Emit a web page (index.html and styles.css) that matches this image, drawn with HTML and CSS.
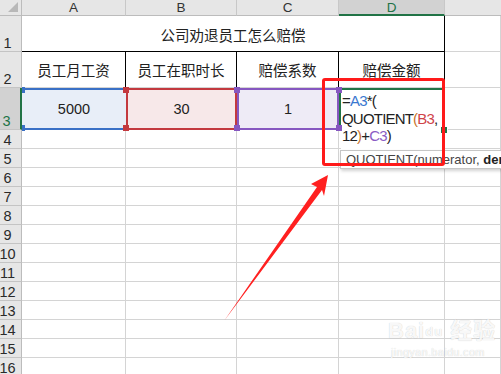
FILE: index.html
```html
<!DOCTYPE html>
<html lang="zh">
<head>
<meta charset="utf-8">
<link rel="stylesheet" href="styles.css">
</head>
<body>
<div class="wrap">
  <div class="sheet">
    <div class="corner"><span class="tri"></span></div>
    <div class="ch">A</div>
    <div class="ch">B</div>
    <div class="ch">C</div>
    <div class="ch ch-sel">D</div>
    <div class="ch ch-e"></div>

    <div class="rh">1</div>
    <div class="title">公司劝退员工怎么赔偿</div>
    <div class="c"></div>

    <div class="rh">2</div>
    <div class="hd">员工月工资</div>
    <div class="hd">员工在职时长</div>
    <div class="hd">赔偿系数</div>
    <div class="hd">赔偿金额</div>
    <div class="c"></div>

    <div class="rh rh-sel">3</div>
    <div class="rng rng-blue">5000<i class="sq tl"></i><i class="sq bl"></i><i class="sq tr"></i><i class="sq br"></i></div>
    <div class="rng rng-red">30<i class="sq tl"></i><i class="sq bl"></i><i class="sq tr"></i><i class="sq br"></i></div>
    <div class="rng rng-purple">1<i class="sq tl"></i><i class="sq bl"></i><i class="sq tr"></i><i class="sq br"></i></div>
    <div class="active">
      <div class="editor"><span class="k">=</span><span class="fb">A3</span><span class="k">*(</span><br><span class="k">QUOTIENT</span><span class="fo">(</span><span class="fr">B3</span><span class="k">,</span><br><span class="k">12</span><span class="fo">)</span><span class="k">+</span><span class="fp">C3</span><span class="k">)</span></div>
      <i class="handle"></i>
    </div>
    <div class="c"></div>

    <div class="rh">4</div><div class="c"></div><div class="c"></div><div class="c"></div><div class="c"></div><div class="c"></div>
    <div class="rh">5</div><div class="c"></div><div class="c"></div><div class="c"></div><div class="c"></div><div class="c"></div>
    <div class="rh">6</div><div class="c"></div><div class="c"></div><div class="c"></div><div class="c"></div><div class="c"></div>
    <div class="rh">7</div><div class="c"></div><div class="c"></div><div class="c"></div><div class="c"></div><div class="c"></div>
    <div class="rh">8</div><div class="c"></div><div class="c"></div><div class="c"></div><div class="c"></div><div class="c"></div>
    <div class="rh">9</div><div class="c"></div><div class="c"></div><div class="c"></div><div class="c"></div><div class="c"></div>
    <div class="rh">10</div><div class="c"></div><div class="c"></div><div class="c"></div><div class="c"></div><div class="c"></div>
    <div class="rh">11</div><div class="c"></div><div class="c"></div><div class="c"></div><div class="c"></div><div class="c"></div>
    <div class="rh">12</div><div class="c"></div><div class="c"></div><div class="c"></div><div class="c"></div><div class="c"></div>
    <div class="rh">13</div><div class="c"></div><div class="c"></div><div class="c"></div><div class="c"></div><div class="c"></div>
    <div class="rh">14</div><div class="c"></div><div class="c"></div><div class="c"></div><div class="c"></div><div class="c"></div>
    <div class="rh">15</div><div class="c"></div><div class="c"></div><div class="c"></div><div class="c"></div><div class="c"></div>
    <div class="rh">16</div><div class="c"></div><div class="c"></div><div class="c"></div><div class="c"></div><div class="c"></div>
  </div>

  <div class="tip">QUOTIENT(numerator, <b>denominator</b>)</div>
  <div class="redbox"></div>
  <svg class="arrow" width="501" height="374" viewBox="0 0 501 374">
    <polygon points="328,175 311,184 317,187 224,321 322,190 324,196" fill="#ff2020"/>
  </svg>
  <div class="wm">
    <div class="wm-top">Bai<span class="paw">du</span> 经验</div>
    <div class="wm-url">jingyan.baidu.com</div>
  </div>
</div>
</body>
</html>
```

FILE: styles.css
```css
* { box-sizing: border-box; margin: 0; padding: 0; }
html, body { width: 501px; height: 374px; overflow: hidden; background: #fff; }
body { font-family: "Liberation Sans", "Noto Sans CJK SC", sans-serif; color: #222; }

.wrap { position: relative; width: 501px; height: 374px; overflow: hidden; }

.sheet {
  display: grid;
  grid-template-columns: 22px 104px 111px 102px 106px 1fr;
  grid-template-rows: 16px 36px 36px 42px repeat(13, 19px);
  width: 501px;
}

.sheet > div {
  border-right: 1px solid #d4d4d4;
  border-bottom: 1px solid #d4d4d4;
}

.corner {
  background: #e6e6e6;
  position: relative;
  border-right-color: #bcbcbc !important;
  border-bottom-color: #bcbcbc !important;
}
.tri {
  position: absolute; right: 3px; bottom: 3px;
  width: 0; height: 0;
  border-left: 10px solid transparent;
  border-bottom: 10px solid #b8b8b8;
}

.ch {
  background: #e6e6e6;
  border-right-color: #c8c8c8 !important;
  border-bottom-color: #bcbcbc !important;
  font-size: 13.5px;
  line-height: 15px;
  text-align: center;
  color: #333;
}
.ch-sel {
  background: #d2d2d2;
  color: #217346;
  border-bottom: 2px solid #217346 !important;
}
.ch-e { border-right: none !important; }

.rh {
  background: #e6e6e6;
  border-right-color: #bcbcbc !important;
  border-bottom-color: #c4c4c4 !important;
  font-size: 14.5px;
  color: #2a2a2a;
  display: flex;
  align-items: flex-end;
  justify-content: center;
  padding-right: 6px;
  line-height: 16px;
}
.rh-sel {
  background: #d2d2d2;
  color: #217346;
  border-right: 2px solid #217346 !important;
  padding-right: 7px;
}

.title {
  grid-column: 2 / 6;
  border-right: 1px solid #000 !important;
  border-bottom: 1px solid #000 !important;
  font-family: "Noto Sans CJK SC", sans-serif;
  font-size: 14.5px;
  display: flex; align-items: center; justify-content: center;
  padding-top: 1px;
}

.hd {
  border-right: 1px solid #000 !important;
  font-family: "Noto Sans CJK SC", sans-serif;
  font-size: 14.5px;
  display: flex; align-items: center; justify-content: center;
}

.rng {
  position: relative;
  font-size: 14.5px;
  display: flex; align-items: center; justify-content: center;
  border: none !important;
}
.rng-blue { background: #e8eef8; box-shadow: inset 0 2px 0 #3a70c6, inset 0 -2px 0 #3a70c6; }
.rng-red { background: #f7e8e9; box-shadow: inset 0 0 0 2px #c3393f; }
.rng-purple { background: #eeebf6; box-shadow: inset 0 0 0 2px #8657c0; }

.sq {
  position: absolute; width: 6px; height: 6px; z-index: 3;
}
.rng-blue .sq { background: #3a70c6; }
.rng-red .sq { background: #c3393f; }
.rng-purple .sq { background: #8657c0; }
.sq.tl { left: -3px; top: -1px; }
.sq.bl { left: -3px; bottom: -1px; }
.sq.tr { right: -3px; top: -1px; }
.sq.br { right: -3px; bottom: -1px; }
.rng-blue .sq.tl, .rng-blue .sq.bl { left: 0; width: 3px; }

.active {
  position: relative;
  border: none !important;
  border-left: 2px solid #217346 !important;
  border-top: 2px solid #217346 !important;
  border-right: 2px solid #217346 !important;
  z-index: 2;
}
.editor {
  position: absolute;
  left: 0; top: 0; right: 0;
  height: 60px;
  background: #fff;
  font-size: 15px;
  letter-spacing: -0.8px;
  line-height: 17.5px;
  padding-left: 1px;
  padding-top: 2px;
  color: #222;
  white-space: nowrap;
}
.fb { color: #3a78d0; }
.fr { color: #d0444a; }
.fo { color: #c8742c; }
.fp { color: #8a5cc4; }
.handle {
  position: absolute; right: -4px; bottom: -3px;
  width: 6px; height: 6px; background: #217346;
  outline: 1px solid #fff;
}

.tip {
  position: absolute;
  left: 340px; top: 150px;
  width: 180px; height: 19px;
  background: #fff;
  border: 1px solid #c6c6c6;
  box-shadow: 1px 2px 3px rgba(0,0,0,0.18);
  font-size: 13px;
  line-height: 17px;
  padding-left: 5px;
  color: #444;
  white-space: nowrap;
  z-index: 4;
}
.tip b { color: #222; }

.redbox {
  position: absolute;
  left: 322px; top: 78px;
  width: 123px; height: 88px;
  border: 3px solid #ff1a1a;
  border-radius: 3px;
  z-index: 5;
}

.arrow { position: absolute; left: 0; top: 0; z-index: 5; }

.wm {
  position: absolute; left: 388px; top: 318px;
  z-index: 5;
  color: rgba(255,255,255,0.9);
  text-shadow: 0 0 1px rgba(0,0,0,0.14), 0 0 1px rgba(0,0,0,0.1);
}
.wm-top { font-size: 22px; font-weight: bold; line-height: 26px; letter-spacing: 1px; }
.paw { font-size: 13px; vertical-align: 2px; }
.wm-url { font-size: 11px; line-height: 14px; letter-spacing: 0.3px; padding-left: 3px; }
```
